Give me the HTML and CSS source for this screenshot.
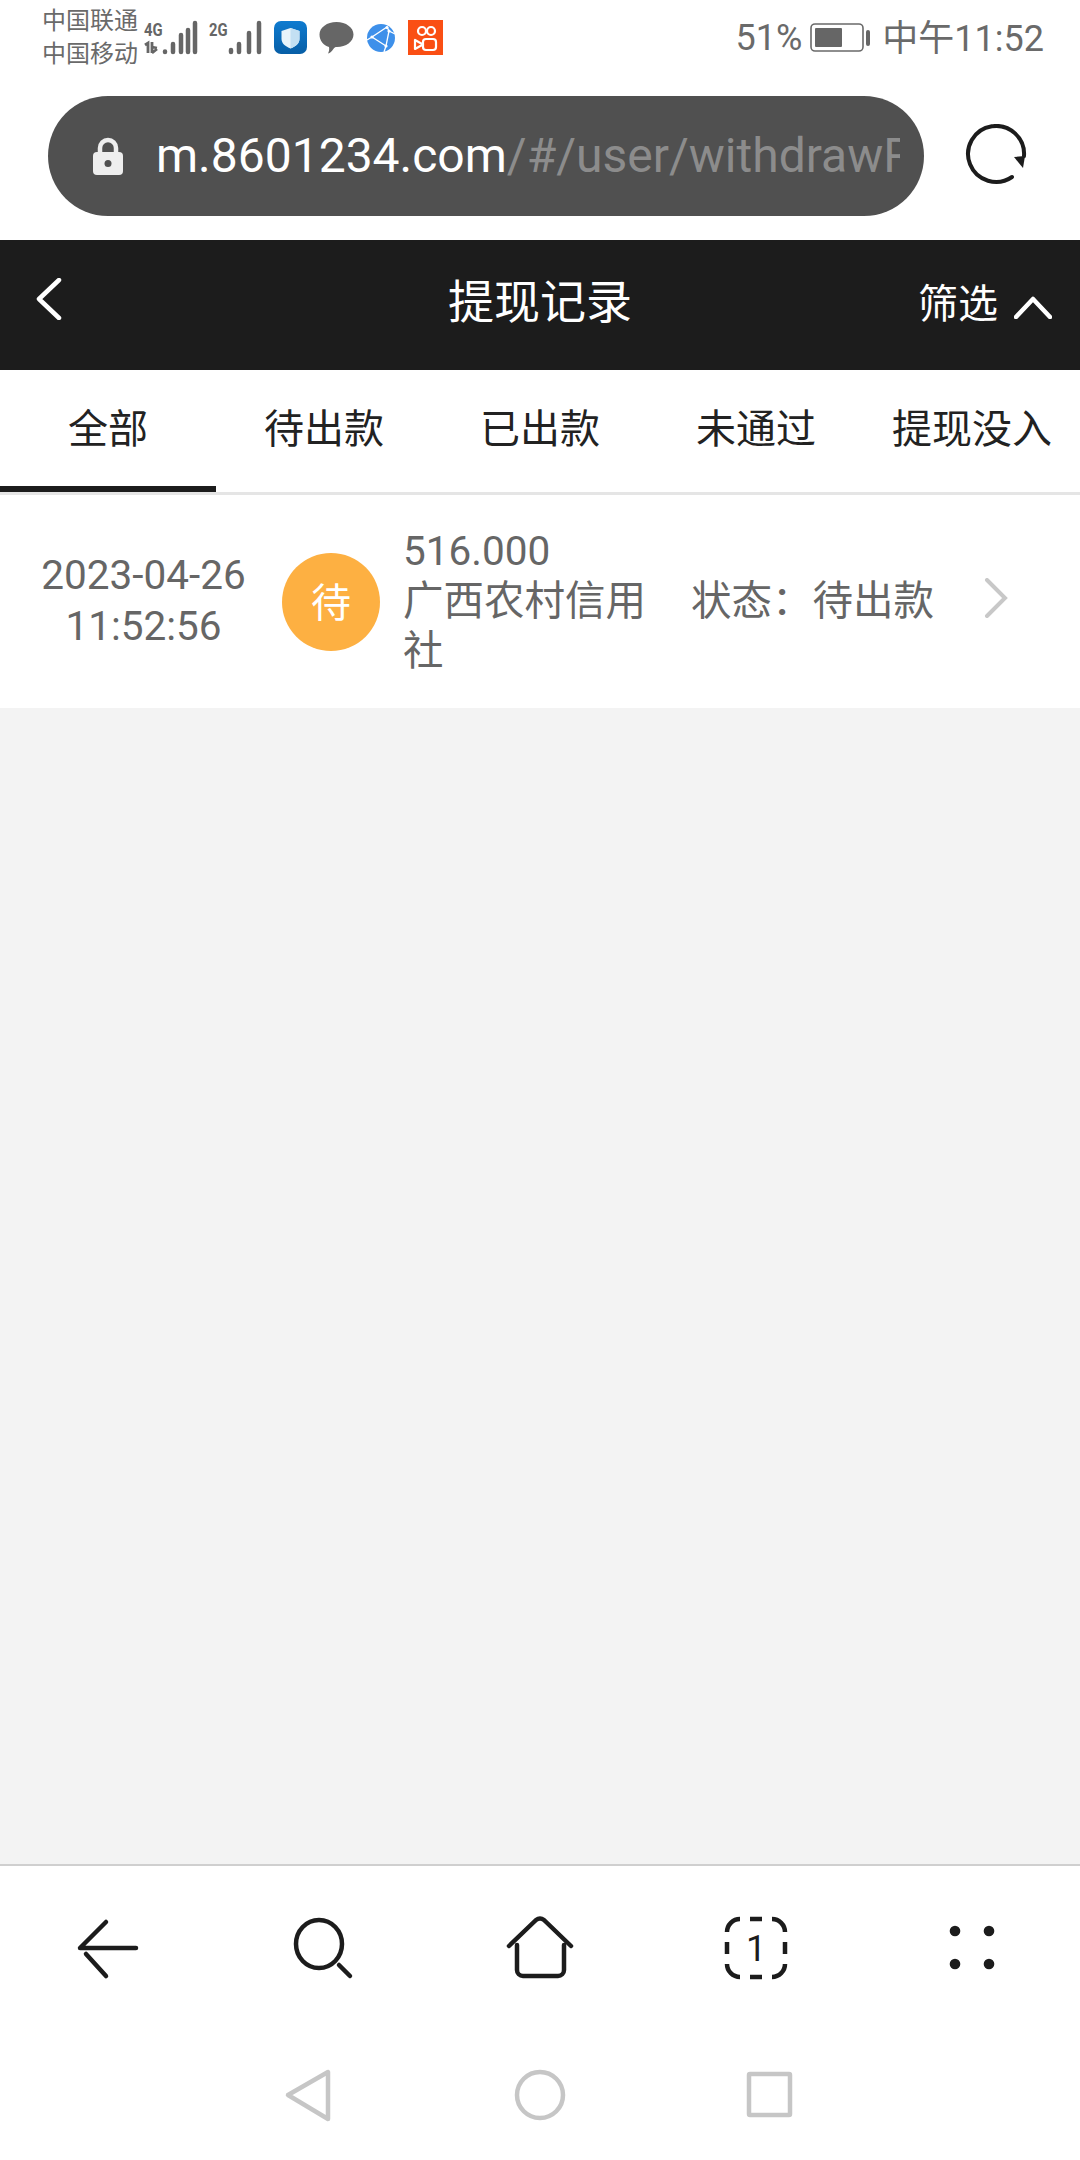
FILE: index.html
```html
<!DOCTYPE html>
<html lang="zh-CN">
<head>
<meta charset="utf-8">
<title>提现记录</title>
<link rel="stylesheet" href="styles.css">
</head>
<body>
<div class="app">
  <header class="status">
    <div class="carriers"><div>中国联通</div><div>中国移动</div></div>
    <svg class="sig4" viewBox="0 0 54 34">
      <text class="net" transform="translate(1 15) scale(.78 1)">4G</text>
      <path class="sig-thin" d="M2 24l3-2v10M9 21v11M9 32l5-4M9 26l5 1"/>
      <path class="sig-bar" d="M22 30.500v.5M30 23v8M38 14v17M45 9v22M52 2v29"/>
    </svg>
    <svg class="sig2" viewBox="0 0 53 34">
      <text class="net" transform="translate(0 15) scale(.78 1)">2G</text>
      <path class="sig-bar" d="M22 29v2M30 23v8M40 12v19M50 2v29"/>
    </svg>
    <svg class="app-shield" viewBox="0 0 33 33">
      <defs><linearGradient id="shieldBg" x1="0" y1="0" x2="0" y2="1"><stop offset="0" stop-color="#0e7bd0"/><stop offset="1" stop-color="#075ea6"/></linearGradient></defs>
      <rect width="33" height="33" rx="7" fill="url(#shieldBg)"/>
      <path d="M16.500 7l9 3v8c0 4.500-4 7.500-9 9.500-5-2-9-5-9-9.500v-8z" fill="#e9f4fb"/>
      <path d="M16.500 7l9 3v8c0 4.500-4 7.500-9 9.500z" fill="#c3e0f3"/>
    </svg>
    <svg class="app-bubble" viewBox="0 0 35 33">
      <path d="M17.500 1C27 1 34.500 6.500 34.500 13.500S27 26 18 26c-2 0-2.500.500-4 2.500-1 1.500-3 3.500-5 4 1-2 1.500-4 1-6.500C4.500 24.500.5 19.500.5 13.500.5 6.500 8 1 17.500 1z" fill="#666"/>
    </svg>
    <svg class="app-globe" viewBox="0 0 28 28">
      <circle cx="14" cy="14" r="14" fill="#3e90ea"/>
      <path class="globe-line" d="M20 3L5 13l14 9 3-15zM5 13L0 16M19 22l-2 6M22 7l6 3M20 3l2 4"/>
      <circle cx="20" cy="3.500" r="1.600" fill="#fff"/><circle cx="5" cy="13" r="1.600" fill="#fff"/>
      <circle cx="19" cy="22" r="1.600" fill="#fff"/><circle cx="22" cy="7" r="1.600" fill="#fff"/>
    </svg>
    <svg class="app-kwai" viewBox="0 0 35 35">
      <rect width="35" height="35" fill="#fa4f14"/>
      <circle class="kwai-line" cx="14" cy="11" r="4"/><circle class="kwai-line" cx="23" cy="11" r="4"/>
      <rect class="kwai-line" x="15" y="19" width="13" height="11" rx="3"/>
      <path class="kwai-line" d="M15 24.500L7 20v9z"/>
    </svg>
    <div class="status-right">
      <span class="pct">51%</span>
      <svg class="battery" viewBox="0 0 62 30">
        <rect class="batt-case" x="1" y="1" width="52" height="27" rx="4"/>
        <rect class="batt-fill" x="5" y="5" width="27" height="19" rx="1"/>
        <rect class="batt-fill" x="56" y="7" width="4" height="16" rx="2"/>
      </svg>
      <span class="clock">中午11:52</span>
    </div>
  </header>

  <div class="urlrow">
    <div class="pill">
      <svg class="lock" viewBox="0 0 30 38">
        <path class="lock-arc" d="M7 17v-6a8 8 0 0 1 16 0v6"/>
        <rect class="lock-body" x="0" y="15" width="30" height="23" rx="4"/>
        <circle class="lock-hole" cx="15" cy="26.500" r="3.500"/>
      </svg>
      <div class="url"><span class="host">m.8601234.com</span><span class="path">/#/user/withdrawRecord</span></div>
    </div>
    <svg class="reload" viewBox="0 0 64 64">
      <path class="reload-arc" d="M48 53A28 28 0 1 1 60 32"/>
      <path class="reload-head" d="M50 33l11 -1 -2 12z"/>
    </svg>
  </div>

  <nav class="navbar">
    <svg class="nav-back" viewBox="0 0 26 42"><path d="M23 2L3 21l20 19"/></svg>
    <div class="nav-title">提现记录</div>
    <div class="nav-filter">
      <span class="nav-filter-label">筛选</span>
      <svg class="nav-up" viewBox="0 0 38 24"><path d="M2 22L19 4l17 18"/></svg>
    </div>
  </nav>

  <div class="tabs">
    <div class="tab active">全部</div>
    <div class="tab">待出款</div>
    <div class="tab">已出款</div>
    <div class="tab">未通过</div>
    <div class="tab">提现没入</div>
  </div>

  <main class="list">
    <article class="record">
      <div class="rec-date"><div>2023-04-26</div><div>11:52:56</div></div>
      <div class="rec-badge">待</div>
      <div class="rec-info"><div>516.000</div><div>广西农村信用社</div></div>
      <div class="rec-state">状态：待出款</div>
      <svg class="rec-more" viewBox="0 0 24 40"><path d="M3 2l18 18L3 38"/></svg>
    </article>
  </main>

  <footer class="toolbar">
    <svg class="tool" viewBox="0 0 72 72"><path class="tool-line" d="M64 36H8L34 10M14 42l20 22"/></svg>
    <svg class="tool" viewBox="0 0 72 72"><ellipse class="tool-line" cx="31" cy="32" rx="23" ry="24"/><path class="tool-line" d="M51 53l11 11"/></svg>
    <svg class="tool" viewBox="0 0 72 72"><path class="tool-line" d="M5 34L32 8q4-3 8 0l27 26M13 33v25a6 6 0 0 0 6 6h35a6 6 0 0 0 6-6V33"/></svg>
    <svg class="tool" viewBox="0 0 72 72">
      <path class="tool-line tool-butt" d="M7 20a13 13 0 0 1 13-13M52 7a13 13 0 0 1 13 13M65 52a13 13 0 0 1-13 13M20 65A13 13 0 0 1 7 52M30 7h12M30 65h12M7 30v12M65 30v12"/>
      <text class="tool-num" x="36" y="49" text-anchor="middle">1</text>
    </svg>
    <svg class="tool" viewBox="0 0 72 72">
      <circle class="tool-dot" cx="19" cy="19" r="5.300"/><circle class="tool-dot" cx="53" cy="19" r="5.300"/>
      <circle class="tool-dot" cx="19" cy="52" r="5.300"/><circle class="tool-dot" cx="53" cy="52" r="5.300"/>
    </svg>
  </footer>

  <div class="sysnav">
    <svg class="sys" viewBox="0 0 72 72"><path class="sys-line" d="M14 36L54 13v47z"/></svg>
    <svg class="sys" viewBox="0 0 72 72"><circle class="sys-line" cx="36" cy="36" r="23"/></svg>
    <svg class="sys" viewBox="0 0 72 72"><rect class="sys-line" x="15" y="15" width="41" height="41" rx="1"/></svg>
  </div>
</div>
</body>
</html>
```

FILE: styles.css
```css
* { box-sizing: border-box; }

html, body {
  margin: 0;
  padding: 0;
  background: #fff;
}

body {
  font-family: Roboto, "Noto Sans CJK SC", sans-serif;
  color: #666;
}

svg { display: block; flex: none; }

.app {
  width: 1080px;
  height: 2160px;
  display: flex;
  flex-direction: column;
  overflow: hidden;
}

/* Phone status bar */
.status {
  height: 75px;
  flex: none;
  display: flex;
  align-items: center;
  padding: 0 36px 0 42px;
  color: #6a6a6a;
}

.carriers {
  width: 101px;
  font-size: 24px;
  line-height: 33px;
  white-space: nowrap;
}

.sig4 { width: 54px; height: 34px; margin-right: 12px; overflow: visible; }
.sig2 { width: 53px; height: 34px; margin-right: 12px; overflow: visible; }
.net { font: 700 19px Roboto, sans-serif; fill: #666; }
.sig-bar { fill: none; stroke: #666; stroke-width: 4.5; stroke-linecap: round; }
.sig-thin { fill: none; stroke: #666; stroke-width: 2.8; }

.app-shield { width: 33px; height: 33px; margin-right: 12px; }
.app-bubble { width: 35px; height: 33px; margin-right: 13px; }
.app-globe { width: 28px; height: 28px; margin-right: 13px; }
.app-kwai { width: 35px; height: 35px; }
.globe-line { fill: none; stroke: #fff; stroke-width: 1.300; }
.kwai-line { fill: none; stroke: #fff; stroke-width: 2.200; stroke-linejoin: round; }

.status-right {
  margin-left: auto;
  display: flex;
  align-items: center;
  font-size: 36px;
  white-space: nowrap;
}

.pct { margin-right: 8px; }
.battery { width: 62px; height: 30px; margin-right: 10px; }
.batt-case { fill: none; stroke: #6a6a6a; stroke-width: 1.600; }
.batt-fill { fill: #666; }
.clock { margin-bottom: 5px; }

/* Browser address row */
.urlrow {
  height: 165px;
  flex: none;
  display: flex;
  align-items: flex-start;
  padding: 21px 0 0 48px;
}

.pill {
  width: 876px;
  height: 120px;
  border-radius: 60px;
  background: #505050;
  display: flex;
  align-items: center;
  padding: 0 24px 0 45px;
}

.lock { width: 30px; height: 38px; margin-right: 33px; }
.lock-arc { fill: none; stroke: #eee; stroke-width: 4.500; }
.lock-body { fill: #eee; }
.lock-hole { fill: #505050; }

.url {
  flex: 1;
  min-width: 0;
  overflow: hidden;
  white-space: nowrap;
  font-size: 48px;
  line-height: 60px;
}

.host { color: #fff; }
.path { color: #8c8c8c; }

.reload { width: 64px; height: 64px; margin: 28px 0 0 40px; }
.reload-arc { fill: none; stroke: #1c1c1c; stroke-width: 4; stroke-linecap: round; }
.reload-head { fill: #1c1c1c; }

/* Page title bar */
.navbar {
  height: 130px;
  flex: none;
  background: #1c1c1c;
  color: #fff;
  display: grid;
  grid-template-columns: 1fr auto 1fr;
  align-items: center;
  padding: 0 28px;
}

.nav-back { width: 26px; height: 42px; margin: 0 0 12px 8px; }
.nav-back path, .nav-up path {
  fill: none;
  stroke: #fff;
  stroke-width: 4.500;
  stroke-linecap: round;
  stroke-linejoin: round;
}

.nav-title {
  font-size: 46px;
  margin-bottom: 14px;
}

.nav-filter {
  justify-self: end;
  display: flex;
  align-items: center;
  font-size: 40px;
}

.nav-filter-label { margin-bottom: 9px; }
.nav-up { width: 38px; height: 24px; margin: 4px 0 0 16px; }

/* Status tabs */
.tabs {
  height: 125px;
  flex: none;
  display: grid;
  grid-template-columns: repeat(5, 216px);
  background: #fff;
  border-bottom: 3px solid #e5e5e5;
  color: #222;
  font-size: 40px;
}

.tab {
  text-align: center;
  padding-top: 36px;
  line-height: 48px;
  white-space: nowrap;
}

.tab.active {
  border-bottom: 6px solid #1c1c1c;
}

/* Record list */
.list {
  flex: 1;
  background: #f3f3f3;
}

.record {
  height: 213px;
  background: #fff;
  display: flex;
  align-items: center;
  padding-left: 41px;
  font-size: 40.5px;
  line-height: 50px;
}

.rec-date {
  width: 205px;
  text-align: center;
  line-height: 51px;
  white-space: nowrap;
  flex: none;
  margin-top: -2px;
}

.rec-badge {
  width: 98px;
  height: 98px;
  flex: none;
  margin-left: 36px;
  border-radius: 50%;
  background: #fdb042;
  color: #fff;
  font-size: 40px;
  line-height: 102px;
  text-align: center;
}

.rec-info {
  width: 244px;
  flex: none;
  margin: -2px 0 0 23px;
}

.rec-state {
  width: 243px;
  flex: none;
  margin: -2px 0 0 44px;
  white-space: nowrap;
}

.rec-more { width: 24px; height: 40px; margin-left: 50px; margin-top: -8px; }
.rec-more path { fill: none; stroke: #c8c8c8; stroke-width: 4; stroke-linecap: round; }

/* Browser toolbar */
.toolbar {
  height: 166px;
  flex: none;
  display: grid;
  grid-template-columns: repeat(5, 216px);
  justify-items: center;
  align-items: center;
  border-top: 2px solid #cfcfcf;
  background: #fff;
}

.tool { width: 72px; height: 72px; }
.tool-line { fill: none; stroke: #1c1c1c; stroke-width: 4.500; stroke-linecap: round; stroke-linejoin: round; }
.tool-butt { stroke-linecap: butt; }
.tool-num { font: 400 36px Roboto, sans-serif; fill: #1c1c1c; }
.tool-dot { fill: #1c1c1c; }

/* Phone navigation keys */
.sysnav {
  height: 130px;
  flex: none;
  display: flex;
  justify-content: center;
  align-items: center;
  gap: 158px;
  background: #fff;
}

.sys { width: 72px; height: 72px; }
.sys-line { fill: none; stroke: #c6c6c6; stroke-width: 4.500; stroke-linejoin: round; }
```
